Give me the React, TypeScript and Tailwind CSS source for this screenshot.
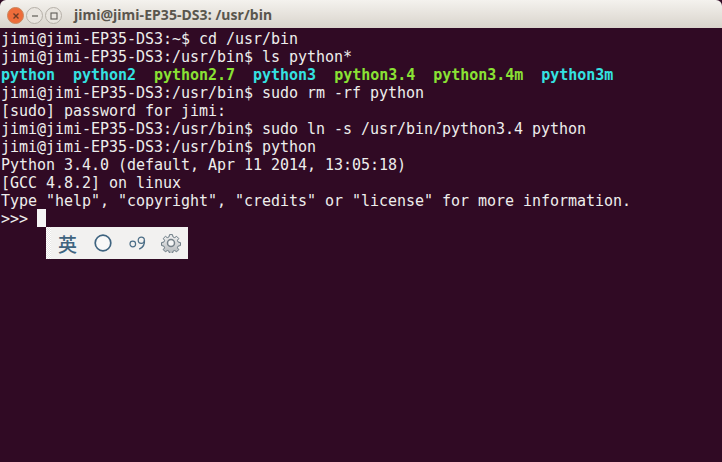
const lines = [
  "jimi@jimi-EP35-DS3:~$ cd /usr/bin",
  "jimi@jimi-EP35-DS3:/usr/bin$ ls python*",
  null,
  "jimi@jimi-EP35-DS3:/usr/bin$ sudo rm -rf python",
  "[sudo] password for jimi:",
  "jimi@jimi-EP35-DS3:/usr/bin$ sudo ln -s /usr/bin/python3.4 python",
  "jimi@jimi-EP35-DS3:/usr/bin$ python",
  "Python 3.4.0 (default, Apr 11 2014, 13:05:18)",
  "[GCC 4.8.2] on linux",
  'Type "help", "copyright", "credits" or "license" for more information.',
];

// ls output: links in cyan, binaries in green
const files = [
  { name: "python", link: true },
  { name: "python2", link: true },
  { name: "python2.7", link: false },
  { name: "python3", link: true },
  { name: "python3.4", link: false },
  { name: "python3.4m", link: false },
  { name: "python3m", link: true },
];

function WindowButtons() {
  return (
    <div className="mt-[3px] flex items-center gap-[2px]">
      <div className="w-[17px] h-[17px] rounded-full bg-[#ee6c3a] border border-[#c9875f] flex items-center justify-center">
        <svg width="8" height="8" viewBox="0 0 8 8">
          <path d="M1.5 1.5 L6.5 6.5 M6.5 1.5 L1.5 6.5" stroke="#6b3a26" strokeWidth="1.4" />
        </svg>
      </div>
      <div className="w-[17px] h-[17px] rounded-full bg-[#e9e5df] border border-[#b5b0a8] flex items-center justify-center">
        <svg width="8" height="8" viewBox="0 0 8 8">
          <path d="M1 4 H7" stroke="#5f5c56" strokeWidth="1.2" />
        </svg>
      </div>
      <div className="w-[17px] h-[17px] rounded-full bg-[#e9e5df] border border-[#b5b0a8] flex items-center justify-center">
        <svg width="8" height="8" viewBox="0 0 8 8">
          <rect x="1" y="1" width="6" height="6" fill="none" stroke="#5f5c56" strokeWidth="1.1" />
        </svg>
      </div>
    </div>
  );
}

function ImeBar() {
  return (
    <div className="absolute left-[46px] top-[227px] w-[142px] h-[32px] bg-[#f2f1f0] flex items-center">
      <div className="absolute left-0 top-0 w-[5px] h-full bg-[repeating-conic-gradient(#ffffff_0_25%,#e6e5e4_0_50%)] bg-[length:2px_2px]" />
      <span className="ml-[12px] w-[20px] text-[19px] leading-none font-medium text-[#3f6480] font-['Noto_Sans_CJK_SC',sans-serif]">
        英
      </span>
      <svg className="ml-[16px]" width="18" height="18" viewBox="0 0 18 18">
        <circle cx="9" cy="9" r="7.8" fill="#f8f8f8" stroke="#3f6480" strokeWidth="1.7" />
      </svg>
      <svg className="ml-[17px]" width="17" height="14" viewBox="0 0 17 14">
        <circle cx="3.8" cy="8" r="2.8" fill="none" stroke="#4b6d86" strokeWidth="1.2" />
        <circle cx="12.3" cy="4.2" r="3.1" fill="none" stroke="#4b6d86" strokeWidth="1.2" />
        <path d="M15.4 4.2 C15.8 8 14 11.5 10.2 13.2" fill="none" stroke="#4b6d86" strokeWidth="1.4" />
      </svg>
      <svg className="ml-[15px]" width="20" height="20" viewBox="0 0 24 24">
        <defs>
          <linearGradient id="gear" x1="0" y1="0" x2="0" y2="1">
            <stop offset="0" stopColor="#f2f2f2" />
            <stop offset="1" stopColor="#b4b8bb" />
          </linearGradient>
        </defs>
        <path
          d="M10 1.5h4l.6 3 2.3 1 2.6-1.7 2.8 2.8-1.7 2.6 1 2.3 3 .6v4l-3 .6-1 2.3 1.7 2.6-2.8 2.8-2.6-1.7-2.3 1-.6 3h-4l-.6-3-2.3-1-2.6 1.7-2.8-2.8 1.7-2.6-1-2.3-3-.6v-4l3-.6 1-2.3-1.7-2.6 2.8-2.8 2.6 1.7 2.3-1z"
          transform="translate(1.2 0.6) scale(0.9)"
          fill="url(#gear)"
          stroke="#66757f"
          strokeWidth="1.3"
        />
        <circle cx="12" cy="12" r="4.2" fill="#f6f6f6" stroke="#77828a" strokeWidth="1.8" />
      </svg>
    </div>
  );
}

export default function App() {
  return (
    <div className="relative w-[722px] h-[462px] flex flex-col overflow-hidden bg-[#300a24]">
      <div className="h-[28px] shrink-0 pl-[7px] flex items-center rounded-t-[6px] bg-gradient-to-b from-[#f4f2ee] to-[#d9d4cc]">
        <WindowButtons />
        <span className="ml-[12px] text-[14px] font-bold tracking-[0.07px] text-[#5a564e] font-['Noto_Sans',sans-serif]">
          jimi@jimi-EP35-DS3: /usr/bin
        </span>
      </div>
      <div className="pl-[1px] pt-[2px] text-[15px] leading-[18px] tracking-[-0.03px] text-[#eeeeec] whitespace-pre font-['DejaVu_Sans_Mono',monospace]">
        {lines.map((line, i) =>
          line === null ? (
            <div key={i} className="h-[18px] font-bold">
              {files.map((f, j) => (
                <span key={f.name} className={f.link ? "text-[#34e2e2]" : "text-[#8ae234]"}>
                  {f.name}
                  {j < files.length - 1 ? "  " : ""}
                </span>
              ))}
            </div>
          ) : (
            <div key={i} className="h-[18px]">
              {line}
            </div>
          )
        )}
        <div className="h-[18px] flex">
          <span>{">>> "}</span>
          <span className="w-[9px] h-[18px] -translate-y-px bg-[#f5f5f5]" />
        </div>
      </div>
      <ImeBar />
    </div>
  );
}
